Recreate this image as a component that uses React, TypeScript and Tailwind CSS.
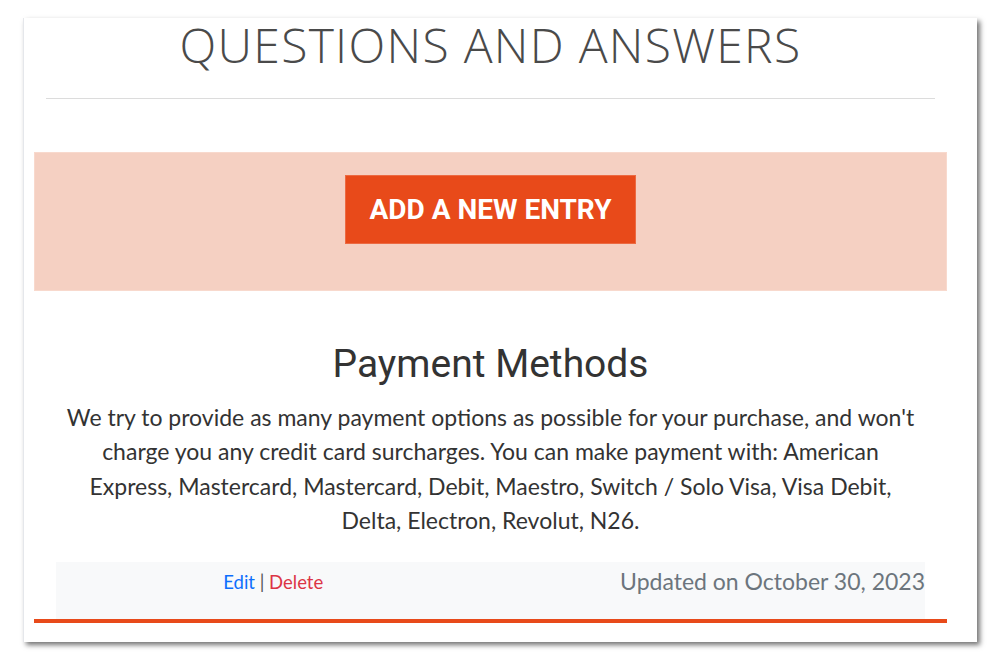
export default function App() {
  return (
    <div className="w-[1000px] h-[661px] bg-white pt-[18px] pl-[23px]">
      <div className="w-[954px] h-[624px] bg-white shadow-[3px_3px_5px_rgba(0,0,0,0.55)] border-l border-gray-200 pl-[10px] pr-[30px]">
        {/* --- Title --- */}
        <h1 className="text-center text-[48px] leading-[54px] tracking-[1.3px] font-light text-[#4a4a4a] font-['Open_Sans',sans-serif]">
          QUESTIONS AND ANSWERS
        </h1>
        <div className="mx-[12px] mt-[26px] border-t border-[#dcdcdc]" />

        {/* --- Add entry band --- */}
        <div className="mt-[53px] h-[139px] bg-[#f5d0c2] border border-[#f8d9cd] flex items-start justify-center pt-[22px]">
          <button className="w-[291px] h-[69px] bg-[#e84a1a] border border-[#ec6a42] text-white text-[28px] font-bold font-['Roboto',sans-serif]">
            ADD A NEW ENTRY
          </button>
        </div>

        {/* --- Entry --- */}
        <div className="pt-[50px] text-center">
          <h2 className="text-[39px] leading-[46px] text-[#333] font-['Roboto',sans-serif]">Payment Methods</h2>
          <p className="mt-[13px] px-[28px] text-[23px] leading-[34.4px] text-[#333] font-['Lato',sans-serif]">
            We try to provide as many payment options as possible for your purchase, and won't charge you any credit card surcharges. You can make payment with: American Express, Mastercard, Mastercard, Debit, Maestro, Switch / Solo Visa, Visa Debit, Delta, Electron, Revolut, N26.
          </p>
        </div>

        <div className="mx-[22px] mt-[24px] h-[57px] bg-[#f8f9fa] flex font-['Lato',sans-serif]">
          <div className="w-1/2 text-center text-[18.5px] pt-[7px]">
            <a href="#" className="text-[#0d6efd]">Edit</a>
            <span className="text-[#555]"> | </span>
            <a href="#" className="text-[#dc3545]">Delete</a>
          </div>
          <div className="w-1/2 text-right text-[23px] text-[#6c757d] pt-[2px]">Updated on October 30, 2023</div>
        </div>
        <div className="h-[4px] bg-[#e84a1a]" />
      </div>
    </div>
  );
}
